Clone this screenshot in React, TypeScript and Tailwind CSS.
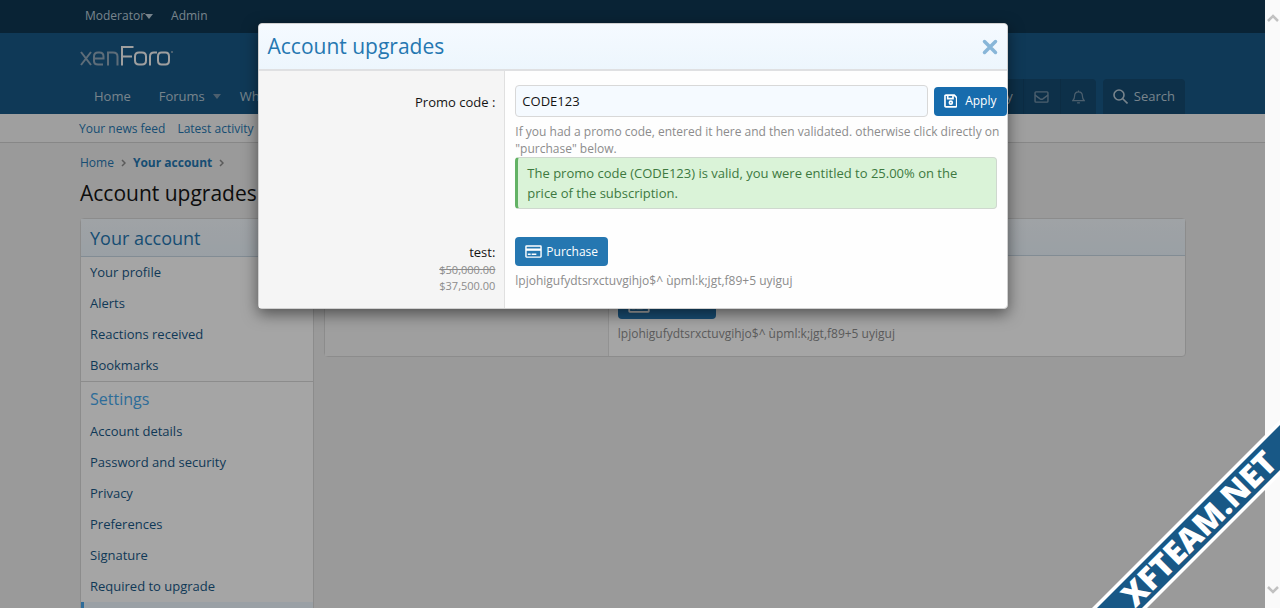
import type { ReactNode } from 'react';

const FONT = "font-['Open_Sans','Noto_Sans',sans-serif]";

const accountLinks = ['Your profile', 'Alerts', 'Reactions received', 'Bookmarks'];

const settingsLinks = [
  'Account details',
  'Password and security',
  'Privacy',
  'Preferences',
  'Signature',
  'Required to upgrade',
];

const DESCRIPTION = 'lpjohigufydtsrxctuvgihjo$^ ùpml:k;jgt,f89+5 uyiguj';

function Logo() {
  return (
    <svg viewBox="0 0 94 22" className="h-[22px] w-[94px]" fill="none" strokeWidth="2" role="img" aria-label="xenForo">
      <g stroke="#91a8ba">
        <path d="M1 7l10 13M11 7L1 20" />
        <path d="M14 13.500h9.500v-2q0-4-4-4h-1.500q-4 0-4 4v4.500q0 3.500 4 3.500h5" />
        <path d="M28 20.500v-13h5q4.500 0 4.500 4v9" />
      </g>
      <g stroke="#f5f5f5">
        <path d="M42 20.500v-18.500h11.500M42 11.500h10" />
        <path d="M61 7.500h-2q-4 0-4 4v4q0 4 4 4h3q4 0 4-4v-4q0-4-4-4z" />
        <path d="M70 20.500v-9q0-4 4-4h3" />
        <path d="M83 7.500h-1.500q-3.500 0-3.500 4v4q0 4 3.500 4h4q3.500 0 3.500-4v-4q0-4-3.500-4z" />
      </g>
      <circle cx="92" cy="7" r="1" fill="#91a8ba" />
    </svg>
  );
}

function CardIcon({ className }: { className: string }) {
  return (
    <svg viewBox="0 0 18 14" className={className} fill="none" stroke="currentColor" preserveAspectRatio="none">
      <rect x="1" y="1" width="16" height="12" rx="0.500" strokeWidth="1.500" />
      <path d="M1 5h16" strokeWidth="2.500" />
      <path d="M3 10h3M7 10h5" strokeWidth="1.500" />
    </svg>
  );
}

function SaveIcon() {
  return (
    <svg viewBox="0 0 14 14" className="size-[14px]" fill="none" stroke="currentColor" strokeWidth="1.700">
      <path d="M1 2q0-1 1-1h8.500l2.500 2.500v8.500q0 1-1 1h-10q-1 0-1-1z" />
      <path d="M3.800 1v3.500h5.400v-3.500" />
      <circle cx="7" cy="8.700" r="1.500" />
    </svg>
  );
}

function SideLink({ children }: { children: ReactNode }) {
  return (
    <li>
      <a href="#" className="block px-[9px] text-[13px] leading-[31px] text-[#185886]">
        {children}
      </a>
    </li>
  );
}

function Header() {
  return (
    <header>
      <nav className="flex h-8 items-center gap-[18px] bg-[#0f3652] px-[85px] text-xs text-[#b9cbd8]">
        <a href="#" className="flex items-center">
          Moderator
          <svg viewBox="0 0 8 5" className="h-[5px] w-2" fill="currentColor">
            <path d="M0 0h8L4 5z" />
          </svg>
        </a>
        <a href="#">Admin</a>
      </nav>
      <div className="border-t border-[#0f3652] bg-[#185886] px-20">
        <div className="flex h-[46px] items-center">
          <a href="#">
            <Logo />
          </a>
        </div>
        <nav className="flex h-[35px] items-center text-[13px] text-[#b9cbd8]">
          <a href="#" className="px-3.5">
            Home
          </a>
          <a href="#" className="flex items-center gap-2 pr-[5px] pl-3.5">
            Forums
            <svg viewBox="0 0 8 5" className="h-[5px] w-2" fill="#7693a9">
              <path d="M0 0h8L4 5z" />
            </svg>
          </a>
          <a href="#" className="px-3.5">
            What's new
          </a>
          <div className="ml-auto flex h-full items-center rounded-t-sm bg-[#144a70]">
            <a href="#" className="px-2.5">
              Company
            </a>
            <a
              href="#"
              aria-label="Inbox"
              className="flex h-full w-[37px] items-center justify-center border-l border-[#134467]"
            >
              <svg viewBox="0 0 16 13" className="h-3 w-[15px]" fill="none" stroke="#7693a9" strokeWidth="1.500">
                <rect x="1" y="1" width="14" height="11" rx="1" />
                <path d="M1 4.500l5.500 4q1.500 1 3 0l5.500-4" />
              </svg>
            </a>
            <a
              href="#"
              aria-label="Alerts"
              className="flex h-full w-[36px] items-center justify-center border-l border-[#134467]"
            >
              <svg viewBox="0 0 14 15" className="h-[14px] w-[13px]" fill="none" stroke="#7693a9" strokeWidth="1.300">
                <path d="M7 0.500v1.500M2.800 6.500q0-4.500 4.200-4.500t4.200 4.500q0 3 2 5H0.800q2-2 2-5z" />
                <path d="M5.500 13.800h3" />
              </svg>
            </a>
          </div>
          <a href="#" className="ml-[7px] flex h-full items-center gap-1.5 rounded-t-sm bg-[#144a70] px-2.5">
            <svg viewBox="0 0 15 15" className="size-[15px]" fill="none" stroke="currentColor" strokeWidth="1.600">
              <circle cx="6" cy="6" r="5" />
              <path d="M9.500 9.500l5 5" />
            </svg>
            Search
          </a>
        </nav>
      </div>
      <nav className="flex h-[29px] items-center gap-3 border-b border-[#d0d0d0] bg-[#f5f5f5] px-[79px] pt-0.5 text-xs text-[#2577b1]">
        <a href="#">Your news feed</a>
        <a href="#">Latest activity</a>
      </nav>
    </header>
  );
}

function Chevron() {
  return (
    <svg viewBox="0 0 5 8" className="h-2 w-[5px]" fill="none" stroke="#8c8c8c" strokeWidth="1.500">
      <path d="M1 1l3 3-3 3" />
    </svg>
  );
}

function AccountPage() {
  return (
    <main className="pr-[79px] pl-20">
      <nav aria-label="Breadcrumb" className="flex items-center gap-[7px] pt-2.5 text-xs leading-5 text-[#2577b1]">
        <a href="#">Home</a>
        <Chevron />
        <a href="#" className="font-bold">
          Your account
        </a>
        <Chevron />
      </nav>
      <h1 className="pt-1 pb-[9px] text-[21px] leading-8 text-[#141414]">Account upgrades</h1>
      <div className="flex items-start gap-2.5">
        <aside className="w-[234px] shrink-0 rounded-sm border border-[#d8d8d8] bg-[#fefefe]">
          <h2 className="border-b border-[#c8d8e4] bg-linear-to-b from-[#f5faff] to-[#edf6fd] px-[9px] pt-0.5 text-lg leading-[35px] text-[#2577b1]">
            Your account
          </h2>
          <ul className="border-b border-[#d8d8d8]">
            {accountLinks.map((label) => (
              <SideLink key={label}>{label}</SideLink>
            ))}
          </ul>
          <h3 className="px-[9px] text-base leading-[34px] text-[#47a7eb]">Settings</h3>
          <ul>
            {settingsLinks.map((label) => (
              <SideLink key={label}>{label}</SideLink>
            ))}
            <li>
              <a
                href="#"
                className="block border-l-3 border-[#47a7eb] bg-[#edf6fd] px-1.5 text-[13px] leading-[31px] text-[#2577b1]"
              >
                Account upgrades
              </a>
            </li>
          </ul>
        </aside>
        <section className="grow rounded-sm border border-[#d8d8d8] bg-[#fefefe]">
          <div className="h-[37px] border-b border-[#c8d8e4] bg-linear-to-b from-[#f5faff] to-[#edf6fd]" />
          <div className="grid grid-cols-[33%_1fr]">
            <div className="border-r border-[#e0e0e0] bg-[#f5f5f5]" />
            <div className="px-[9px] pt-[34px] pb-3 text-xs text-[#8c8c8c]">
              <button className="flex h-[29px] items-center gap-1 rounded-sm bg-[#2577b1] px-2.5 text-white">
                <CardIcon className="h-4 w-[22px]" />
                Purchase
              </button>
              <p className="pt-[5px] leading-5">{DESCRIPTION}</p>
            </div>
          </div>
        </section>
      </div>
    </main>
  );
}

function UpgradeDialog() {
  return (
    <div
      role="dialog"
      aria-labelledby="dialog-title"
      className="w-[750px] max-w-full rounded-sm border border-[#d0d0d0] bg-[#fefefe] shadow-[0_5px_15px_rgba(0,0,0,0.5)]"
    >
      <div className="flex items-center justify-between rounded-t-sm border-b-2 border-[#dfe0e2] bg-linear-to-b from-[#f5faff] to-[#edf6fd] px-[9px]">
        <h2 id="dialog-title" className="text-[21px] leading-[45px] text-[#2577b1]">
          Account upgrades
        </h2>
        <button aria-label="Close" className="text-[#88b6d8]">
          <svg viewBox="0 0 16 16" className="size-4" stroke="currentColor" strokeWidth="3.500" strokeLinecap="round">
            <path d="M2.500 2.500l11 11M13.500 2.500l-11 11" />
          </svg>
        </button>
      </div>
      <form onSubmit={(e) => e.preventDefault()} className="grid grid-cols-[33%_1fr]">
        <div className="border-r border-[#e0e0e0] bg-[#f5f5f5] pt-[21px] pr-[9px] text-right text-[13px] leading-5 text-[#141414]">
          <label htmlFor="promo">Promo code :</label>
        </div>
        <div className="pt-3.5 pl-2.5">
          <div className="flex items-center gap-1.5">
            <input
              id="promo"
              defaultValue="CODE123"
              className="h-8 min-w-0 grow rounded-sm border border-[#d8d8d8] bg-[#f5faff] px-1.5 text-[13px] text-[#141414]"
            />
            <button className="flex h-[29px] w-[73px] items-center gap-2 rounded-sm bg-[#176cad] px-2.5 text-xs text-white">
              <SaveIcon />
              Apply
            </button>
          </div>
          <p className="pt-[6px] text-xs leading-[17px] text-[#8c8c8c]">
            If you had a promo code, entered it here and then validated. otherwise click directly on "purchase" below.
          </p>
          <p className="mr-2.5 rounded-sm border border-l-3 border-[#cfd8cf] border-l-[#63b265] bg-[#daf3d8] px-[9px] py-[5px] text-[13px] leading-5 text-[#3d793f]">
            The promo code (CODE123) is valid, you were entitled to 25.00% on the price of the subscription.
          </p>
        </div>
        <div className="border-r border-[#e0e0e0] bg-[#f5f5f5] pt-[34px] pr-[9px] text-right text-[11px] leading-4 text-[#8c8c8c]">
          <p className="text-[13px] leading-[19px] text-[#141414]">test:</p>
          <p className="line-through">$50,000.00</p>
          <p>$37,500.00</p>
        </div>
        <div className="pt-7 pb-[17px] pl-2.5">
          <button className="flex h-[29px] items-center gap-1 rounded-sm bg-[#2577b1] px-2.5 text-xs text-white">
            <CardIcon className="h-[13px] w-[17px]" />
            Purchase
          </button>
          <p className="pt-[5px] text-xs leading-5 text-[#8c8c8c]">{DESCRIPTION}</p>
        </div>
      </form>
    </div>
  );
}

export default function App() {
  return (
    <div className={`relative flex h-screen overflow-hidden ${FONT}`}>
      <div className="relative min-w-0 grow overflow-hidden bg-[#ededed]">
        <Header />
        <AccountPage />
        <div className="absolute inset-0 flex items-start justify-center bg-black/35 pt-[23px]">
          <UpgradeDialog />
        </div>
      </div>
      <div className="flex w-[15px] shrink-0 flex-col items-center justify-between bg-[#fafafa] py-3.5">
        <svg viewBox="0 0 12 8" className="h-2 w-3" fill="none" stroke="#c1c1c1" strokeWidth="2.500">
          <path d="M1 7l5-5 5 5" />
        </svg>
        <svg viewBox="0 0 12 8" className="h-2 w-3" fill="none" stroke="#c1c1c1" strokeWidth="2.500">
          <path d="M1 1l5 5 5-5" />
        </svg>
      </div>
      <svg viewBox="0 0 190 190" className="absolute right-0 bottom-0 size-[190px]">
        <path d="M2 190L190 2V57L57 190z" fill="#fff" />
        <path d="M7 190L190 7V52L52 190z" fill="#185886" />
        <text
          x="108"
          y="110"
          fill="#fff"
          fontSize="32"
          fontWeight="800"
          textAnchor="middle"
          dominantBaseline="central"
          transform="rotate(-45 108 110)"
        >
          XFTEAM.NET
        </text>
      </svg>
    </div>
  );
}
